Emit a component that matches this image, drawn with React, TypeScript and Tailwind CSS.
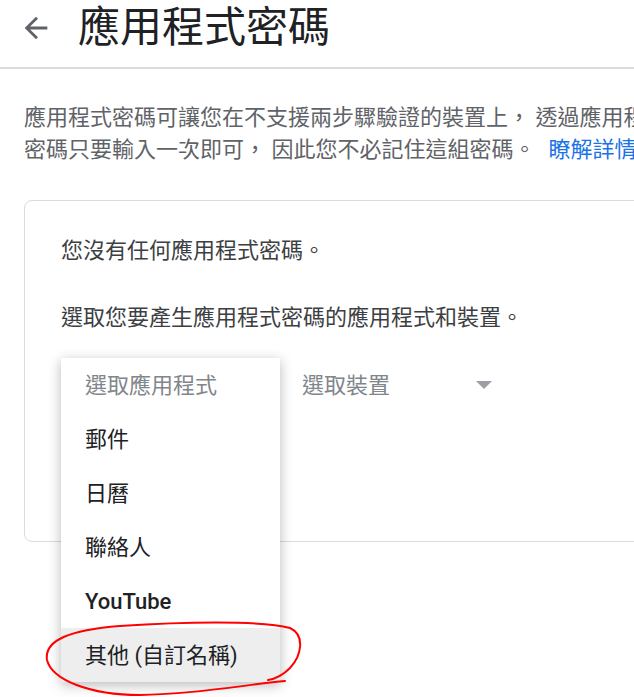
import { useState } from 'react';

const font = { fontFamily: "Roboto, 'Noto Sans CJK TC', sans-serif" };

const apps = ['郵件', '日曆', '聯絡人', 'YouTube', '其他 (自訂名稱)'];

function BackArrow() {
  return (
    <svg width="34" height="34" viewBox="0 0 24 24" className="shrink-0">
      <path
        d="M20 11H7.83l5.59-5.59L12 4l-8 8 8 8 1.41-1.41L7.83 13H20v-2z"
        fill="#5f6368"
      />
    </svg>
  );
}

function AppMenu() {
  const [active] = useState(apps.length - 1);
  return (
    <div className="absolute left-0 top-0 z-10 w-[219px] bg-white shadow-[0_3px_12px_rgba(0,0,0,0.28)]">
      <div className="flex h-[54px] items-center pl-6 text-[22px] text-[#80868b]">選取應用程式</div>
      {apps.map((name, i) => (
        <div
          key={name}
          className={
            'flex h-[54px] items-center pl-6 text-[22px] text-[#202124] ' +
            (i === active ? 'bg-[#eeeeee]' : '') +
            (name === 'YouTube' ? ' font-medium' : '')
          }
        >
          {name}
        </div>
      ))}
    </div>
  );
}

export default function App() {
  return (
    <div className="relative h-[697px] w-[634px] overflow-hidden bg-white" style={font}>
      <div className="h-[69px] border-b-2 border-[#dadce0]">
        <div className="flex h-[55px] items-center pl-[19px]">
          <BackArrow />
          <h1 className="ml-[25px] text-[42px] font-normal leading-none text-[#202124]">應用程式密碼</h1>
        </div>
      </div>

      <div className="mt-[33px] whitespace-nowrap pl-6 text-[22px] leading-[32px] text-[#5f6368]">
        <div>應用程式密碼可讓您在不支援兩步驟驗證的裝置上， 透過應用程式登入您的 Google 帳戶。這組</div>
        <div>
          密碼只要輸入一次即可， 因此您不必記住這組密碼。<span className="ml-[13px] text-[#1a73e8]">瞭解詳情</span>
        </div>
      </div>

      <div className="ml-6 mt-[34px] w-[660px] rounded-lg border border-[#dadce0] pb-[129px] pl-9 pt-[34px]">
        <p className="text-[22px] leading-[32px] text-[#3c4043]">您沒有任何應用程式密碼。</p>
        <p className="mt-[35px] text-[22px] leading-[32px] text-[#3c4043]">選取您要產生應用程式密碼的應用程式和裝置。</p>

        <div className="mt-6 flex h-[54px] items-center">
          <div className="relative h-[54px] w-[219px]">
            <div className="flex h-[54px] items-center pl-6 text-[22px] text-[#80868b]">選取應用程式</div>
            <AppMenu />
          </div>
          <div className="flex w-[212px] items-center justify-between pl-[22px] text-[22px] text-[#80868b]">
            <span>選取裝置</span>
            <svg width="16" height="8" viewBox="0 0 16 8">
              <path d="M0 0h16L8 8z" fill="#9aa0a6" />
            </svg>
          </div>
        </div>
      </div>

      <svg className="pointer-events-none absolute left-0 top-0 z-20" width="634" height="697" viewBox="0 0 634 697">
        <path
          d="M285 681 C250 684 200 694 140 695 C90 695 52 680 47 660 C44 640 70 630 120 626 C180 622 260 620 290 628 C305 635 302 655 290 668 C282 676 275 679 268 680"
          fill="none"
          stroke="#ff0000"
          strokeWidth="2"
          strokeLinecap="round"
        />
      </svg>
    </div>
  );
}
